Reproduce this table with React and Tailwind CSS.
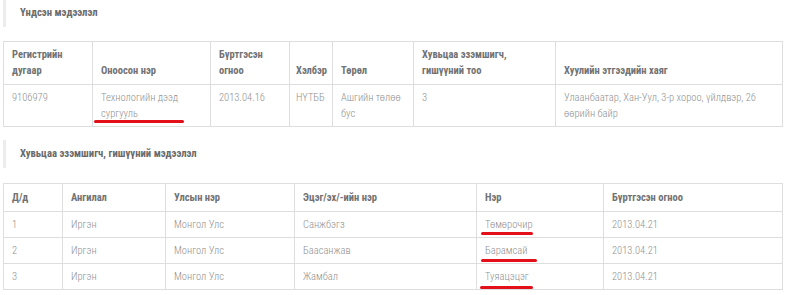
const head = 'text-left align-bottom font-bold text-[#727272] px-2 border border-[#dedede]'
const cell = 'align-top font-light text-[#909090] px-2 border border-[#dedede]'

function Section({ title, className }) {
  return (
    <div className={`h-[28px] flex items-center border-l-[3px] border-[#ececec] pl-[14px] ${className}`}>
      <span className="font-bold text-[10.7px] text-[#6a6a6a]">{title}</span>
    </div>
  )
}

function Mark({ className }) {
  return <span className={`absolute h-[3px] rounded-full bg-[#e3101a] ${className}`} />
}

const members = [
  ['1', 'Иргэн', 'Монгол Улс', 'Санжбэгз', 'Төмөрочир', '2013.04.21', 'w-[52px] top-[20px] left-[4px]'],
  ['2', 'Иргэн', 'Монгол Улс', 'Баасанжав', 'Барамсай', '2013.04.21', 'w-[56px] top-[21px] left-[4px]'],
  ['3', 'Иргэн', 'Монгол Улс', 'Жамбал', 'Туяацэцэг', '2013.04.21', 'w-[53px] top-[22px] left-[3px]'],
]

export default function App() {
  return (
    <div className="w-[785px] h-[295px] overflow-hidden bg-white pl-[3px] text-[10.5px] leading-[16px] font-['Roboto_Condensed',Roboto,sans-serif] font-stretch-condensed">
      <Section title="Үндсэн мэдээлэл" className="-mt-[1px]" />

      <table className="mt-[14px] w-[780px] table-fixed border-collapse">
        <colgroup>
          <col className="w-[89px]" />
          <col className="w-[118px]" />
          <col className="w-[79px]" />
          <col className="w-[43px]" />
          <col className="w-[81px]" />
          <col className="w-[142px]" />
          <col />
        </colgroup>
        <thead>
          <tr>
            <th className={`${head} pt-[5px] pb-[5px]`}>Регистрийн<br />дугаар</th>
            <th className={`${head} pb-[5px]`}>Оноосон нэр</th>
            <th className={`${head} pb-[5px]`}>Бүртгэсэн<br />огноо</th>
            <th className={`${head} pb-[5px] !px-[6px]`}>Хэлбэр</th>
            <th className={`${head} pb-[5px]`}>Төрөл</th>
            <th className={`${head} pb-[5px]`}>Хувьцаа эзэмшигч,<br />гишүүний тоо</th>
            <th className={`${head} pb-[5px]`}>Хуулийн этгээдийн хаяг</th>
          </tr>
        </thead>
        <tbody>
          <tr>
            <td className={`${cell} pt-[5px] pb-[4px]`}>9106979</td>
            <td className={`${cell} pt-[5px] pb-[4px] relative`}>
              Технологийн дээд<br />сургууль
              <Mark className="w-[90px] top-[35px] left-[1px]" />
            </td>
            <td className={`${cell} pt-[5px] pb-[4px]`}>2013.04.16</td>
            <td className={`${cell} pt-[5px] pb-[4px] !px-[6px]`}>НҮТББ</td>
            <td className={`${cell} pt-[5px] pb-[4px]`}>Ашгийн төлөө<br />бус</td>
            <td className={`${cell} pt-[5px] pb-[4px]`}>3</td>
            <td className={`${cell} pt-[5px] pb-[4px]`}>Улаанбаатар, Хан-Уул, 3-р хороо, үйлдвэр, 26<br />өөрийн байр</td>
          </tr>
        </tbody>
      </table>

      <Section title="Хувьцаа эзэмшигч, гишүүний мэдээлэл" className="mt-[13px]" />

      <table className="mt-[15px] w-[780px] table-fixed border-collapse">
        <colgroup>
          <col className="w-[59px]" />
          <col className="w-[103px]" />
          <col className="w-[129px]" />
          <col className="w-[182px]" />
          <col className="w-[127px]" />
          <col />
        </colgroup>
        <thead>
          <tr>
            <th className={`${head} pt-[6px] pb-[5px]`}>Д/д</th>
            <th className={`${head} pt-[6px] pb-[5px]`}>Ангилал</th>
            <th className={`${head} pt-[6px] pb-[5px]`}>Улсын нэр</th>
            <th className={`${head} pt-[6px] pb-[5px]`}>Эцэг/эх/-ийн нэр</th>
            <th className={`${head} pt-[6px] pb-[5px]`}>Нэр</th>
            <th className={`${head} pt-[6px] pb-[5px]`}>Бүртгэсэн огноо</th>
          </tr>
        </thead>
        <tbody>
          {members.map((m) => (
            <tr key={m[0]}>
              <td className={`${cell} pt-[5px] pb-[4px]`}>{m[0]}</td>
              <td className={`${cell} pt-[5px] pb-[4px]`}>{m[1]}</td>
              <td className={`${cell} pt-[5px] pb-[4px]`}>{m[2]}</td>
              <td className={`${cell} pt-[5px] pb-[4px]`}>{m[3]}</td>
              <td className={`${cell} pt-[5px] pb-[4px] relative`}>
                {m[4]}
                <Mark className={m[6]} />
              </td>
              <td className={`${cell} pt-[5px] pb-[4px]`}>{m[5]}</td>
            </tr>
          ))}
        </tbody>
      </table>
    </div>
  )
}
